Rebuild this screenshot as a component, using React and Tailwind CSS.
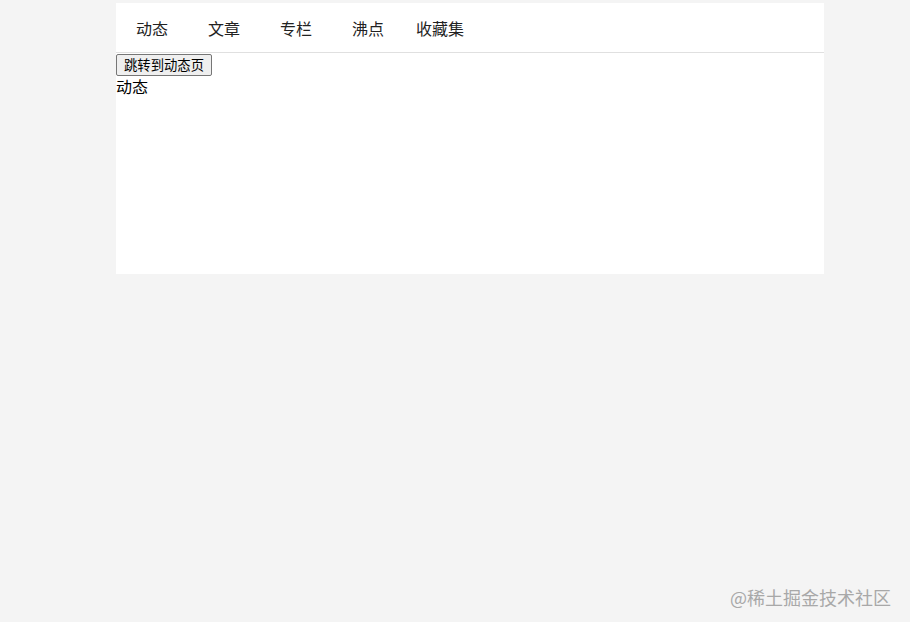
export default function App() {
  const tabs = ["动态", "文章", "专栏", "沸点", "收藏集"];
  return (
    <div
      className="relative w-[910px] h-[622px] bg-[#f4f4f4] pt-[3px] overflow-hidden"
      style={{ fontFamily: '"Noto Sans CJK SC", "Noto Sans", sans-serif' }}
    >
      <div className="ml-[116px] w-[708px] h-[271px] bg-white">
        <div className="flex h-[50px] items-center border-b border-[#e0e0e0] text-[16px] text-[#222]">
          {tabs.map((t) => (
            <div key={t} className="w-[72px] text-center leading-none">
              {t}
            </div>
          ))}
        </div>
        <button className="block mt-[1px] h-[22px] px-[7px] border border-[#767676] rounded-[2px] bg-[#efefef] text-[13.33px] leading-none text-black">
          跳转到动态页
        </button>
        <div className="text-[16px] leading-[21px] text-black">动态</div>
      </div>
      <div className="absolute right-[19px] bottom-[16px] text-[18px] leading-none text-[#a8a8a8]">
        @稀土掘金技术社区
      </div>
    </div>
  );
}
